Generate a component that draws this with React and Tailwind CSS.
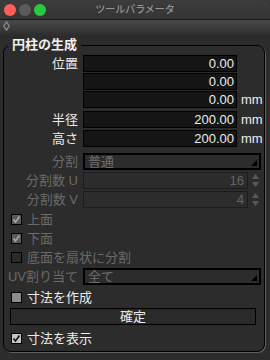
import React from "react";

const FONT = { fontFamily: '"Liberation Sans", "Noto Sans CJK JP", sans-serif' };

function Label({ children, dim }) {
  return (
    <div className={`w-[74px] shrink-0 text-right whitespace-nowrap text-[13px] leading-none ${dim ? "text-[#6a6a6a]" : "text-[#ececec]"}`}>
      {children}
    </div>
  );
}

function NumField({ value }) {
  return (
    <div className="ml-[5px] w-[154px] h-[17px] bg-[#151515] border border-black flex items-center justify-end pr-[2px] text-[13px] leading-none text-[#ececec]">
      {value}
    </div>
  );
}

function Unit() {
  return <div className="ml-[4px] text-[13px] leading-none text-[#ececec]">mm</div>;
}

function Dropdown({ value }) {
  return (
    <div className="ml-[5px] w-[178px] h-[17px] border-2 border-black bg-[#2c2c2c] relative flex items-center pl-[3px] text-[13px] leading-none text-[#6e6e6e]">
      {value}
      <svg className="absolute right-[2px] bottom-[2px]" width="6" height="6" viewBox="0 0 6 6">
        <polygon points="6,0 6,6 0,6" fill="#000" />
      </svg>
    </div>
  );
}

function SpinField({ value }) {
  return (
    <div className="ml-[5px] flex items-center">
      <div className="w-[165px] h-[17px] bg-[#2c2c2c] border border-[#1c1c1c] flex items-center justify-end pr-[3px] text-[13px] leading-none text-[#646464]">
        {value}
      </div>
      <svg className="ml-[3px]" width="9" height="17" viewBox="0 0 9 17">
        <polygon points="4.5,2 8,7 1,7" fill="#595959" />
        <polygon points="1,10 8,10 4.5,15" fill="#595959" />
      </svg>
    </div>
  );
}

function Check({ checked, variant, children, dim }) {
  const box =
    variant === "light"
      ? "bg-[#c4c4c4]"
      : variant === "mid"
      ? "bg-[#8c8c8c]"
      : variant === "dimchecked"
      ? "bg-[#5a5a5a]"
      : "bg-[#2a2a2a]";
  const mark = variant === "light" ? "#111" : "#a8a8a8";
  return (
    <div className="flex items-center pl-[7px]">
      <div className={`w-[11px] h-[11px] border border-black ${box} flex items-center justify-center`}>
        {checked && (
          <svg width="9" height="9" viewBox="0 0 9 9">
            <polyline points="1.5,4.5 3.5,7 7.5,1.5" fill="none" stroke={mark} strokeWidth="1.6" />
          </svg>
        )}
      </div>
      <div className={`ml-[5px] text-[13px] leading-none ${dim ? "text-[#6a6a6a]" : "text-[#ececec]"}`}>{children}</div>
    </div>
  );
}

export default function App() {
  return (
    <div className="w-[270px] h-[360px] bg-[#3a3a3a] overflow-hidden" style={FONT}>
      <div className="w-[270px] h-[360px] bg-[#2c2c2c] rounded-t-[7px] overflow-hidden flex flex-col">
        {/* title bar */}
        <div className="h-[20px] shrink-0 grid grid-cols-[46px_1fr_46px] items-center bg-gradient-to-b from-[#3c3c3c] to-[#353535] border-b border-[#161616]">
          <div className="flex items-center gap-[3px] pl-[4px]">
            <div className="w-[12px] h-[12px] rounded-full bg-[#fe5f57]" />
            <div className="w-[12px] h-[12px] rounded-full bg-[#5b5b5d]" />
            <div className="w-[12px] h-[12px] rounded-full bg-[#28c840]" />
          </div>
          <div className="text-center text-[10px] leading-none text-[#a6a6a6]">ツールパラメータ</div>
          <div />
        </div>
        {/* toolbar */}
        <div className="h-[16px] shrink-0 flex items-start pt-[1px] pl-[3px] bg-gradient-to-b from-[#4a4a4a] to-[#2c2c2c]">
          <svg width="7" height="10" viewBox="0 0 7 10">
            <polygon points="3.5,0.8 6.2,5 3.5,9.2 0.8,5" fill="none" stroke="#8a8a8a" strokeWidth="1.3" />
          </svg>
        </div>
        {/* group */}
        <fieldset className="mx-[3px] w-[262px] h-[316px] border border-black rounded-[8px] shadow-[1px_1px_0_#5e5e5e]">
          <legend className="ml-[4px] px-[4px] h-[18px] text-[13px] leading-[18px] font-bold text-[#f2f2f2]">円柱の生成</legend>
          <div className="flex flex-col">
            <div className="mt-[1px] h-[17px] flex items-center">
              <Label>位置</Label>
              <NumField value="0.00" />
            </div>
            <div className="mt-[1px] h-[17px] flex items-center">
              <Label />
              <NumField value="0.00" />
            </div>
            <div className="mt-[1px] h-[17px] flex items-center">
              <Label />
              <NumField value="0.00" />
              <Unit />
            </div>
            <div className="mt-[3px] h-[17px] flex items-center">
              <Label>半径</Label>
              <NumField value="200.00" />
              <Unit />
            </div>
            <div className="mt-[2px] h-[17px] flex items-center">
              <Label>高さ</Label>
              <NumField value="200.00" />
              <Unit />
            </div>
            <div className="mt-[6px] h-[17px] flex items-center">
              <Label dim>分割</Label>
              <Dropdown value="普通" />
            </div>
            <div className="mt-[2px] h-[17px] flex items-center">
              <Label dim>分割数 U</Label>
              <SpinField value="16" />
            </div>
            <div className="mt-[2px] h-[17px] flex items-center">
              <Label dim>分割数 V</Label>
              <SpinField value="4" />
            </div>
            <div className="mt-[2px] h-[19px] flex items-center">
              <Check checked variant="dimchecked" dim>上面</Check>
            </div>
            <div className="h-[19px] flex items-center">
              <Check checked variant="dimchecked" dim>下面</Check>
            </div>
            <div className="h-[19px] flex items-center">
              <Check variant="dark" dim>底面を扇状に分割</Check>
            </div>
            <div className="mt-[1px] h-[17px] flex items-center">
              <Label dim>UV割り当て</Label>
              <Dropdown value="全て" />
            </div>
            <div className="mt-[2px] h-[20px] flex items-center">
              <Check variant="mid">寸法を作成</Check>
            </div>
            <div className="mt-[1px] ml-[6px] w-[246px] h-[17px] bg-[#2a2a2a] border border-black flex items-center justify-center text-[13px] leading-none text-[#ececec]">
              確定
            </div>
            <div className="mt-[3px] h-[20px] flex items-center">
              <Check checked variant="light">寸法を表示</Check>
            </div>
          </div>
        </fieldset>
      </div>
    </div>
  );
}
